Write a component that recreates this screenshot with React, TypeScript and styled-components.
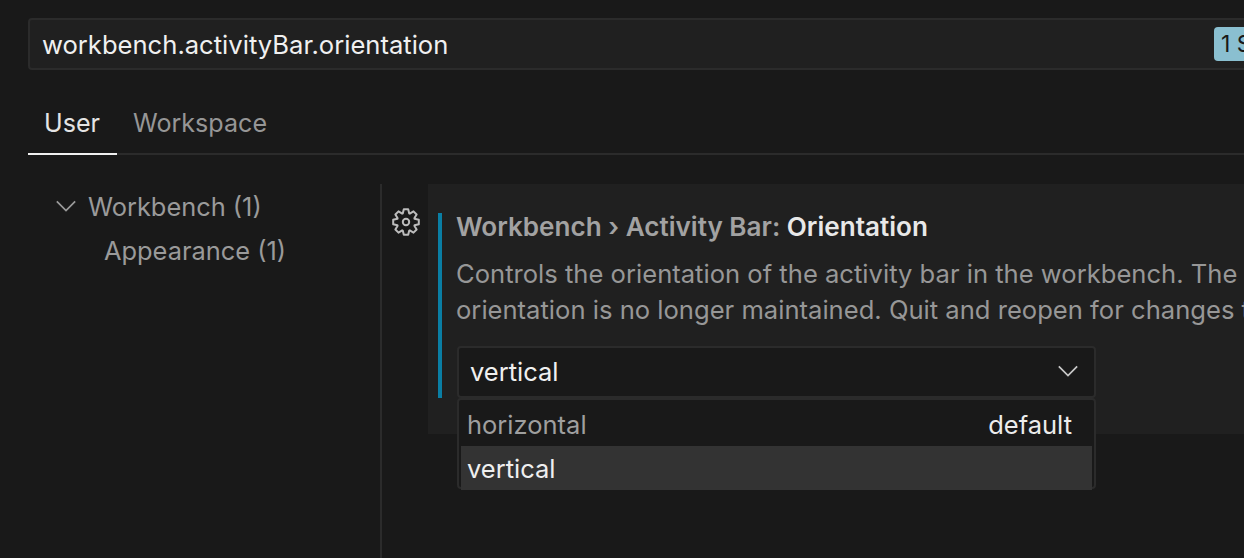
import React from "react";
import styled, { createGlobalStyle } from "styled-components";

const GlobalStyle = createGlobalStyle`
  html, body {
    margin: 0;
    height: 100%;
    background: #191919;
    overflow: hidden;
  }
  #root {
    height: 100%;
  }
`;

const Page = styled.div`
  height: 558px;
  width: 1244px;
  box-sizing: border-box;
  padding: 18px 0 0 28px;
  font-family: Inter, "Noto Sans", sans-serif;
  font-size: 25.5px;
  color: #9d9d9d;
  overflow: hidden;
`;

const SearchBox = styled.div`
  box-sizing: border-box;
  width: 1260px;
  height: 52px;
  display: flex;
  align-items: center;
  padding-left: 12px;
  background: #202020;
  border: 2px solid #2b2b2b;
  border-radius: 4px;
  font-size: 25.6px;
  color: #f0f0f0;
`;

const ResultCount = styled.span`
  margin: 0 16px 0 auto;
  height: 34px;
  width: 56px;
  padding-left: 7px;
  box-sizing: border-box;
  border-radius: 4px;
  background: #8abfd0;
  color: #191919;
  font-size: 23px;
  line-height: 34px;
  white-space: nowrap;
  overflow: hidden;
`;

const Tabs = styled.div`
  display: flex;
  height: 85px;
  box-sizing: border-box;
  width: 1260px;
  align-items: flex-end;
  border-bottom: 2px solid #2b2b2b;
`;

const Tab = styled.div<{ $active?: boolean }>`
  box-sizing: content-box;
  height: 30px;
  line-height: 30px;
  padding: 0 17px 15px 16px;
  margin-bottom: -2px;
  font-size: 25.1px;
  border-bottom: 2px solid ${(p) => (p.$active ? "#f0f0f0" : "transparent")};
  color: ${(p) => (p.$active ? "#e4e4e4" : "#969696")};
`;

const Body = styled.div`
  display: flex;
  margin-top: 29px;
  height: 400px;
`;

const Tree = styled.div`
  width: 352px;
  flex-shrink: 0;
  font-size: 25.4px;
  color: #9a9a9a;
`;

const TreeRow = styled.div<{ $depth: number }>`
  display: flex;
  align-items: center;
  height: 44px;
  padding-left: ${(p) => (p.$depth === 0 ? 27 : 76)}px;
  gap: 11px;
`;

const Content = styled.div`
  flex: 1;
  display: flex;
  border-left: 2px solid #2b2b2b;
  padding-left: 10px;
`;

const GearSlot = styled.div`
  width: 36px;
  flex-shrink: 0;
  padding-top: 24px;
  color: #bcbcbc;
`;

const Card = styled.div`
  position: relative;
  width: 830px;
  height: 250px;
  box-sizing: border-box;
  background: #202020;
  padding: 29px 0 0 10px;
`;

const Setting = styled.div`
  box-sizing: border-box;
  height: 185px;
  border-left: 4px solid #0a7ea4;
  padding-left: 15px;
`;

const SettingTitle = styled.div`
  height: 28px;
  line-height: 28px;
  margin-left: -1px;
  font-size: 26.1px;
  font-weight: 600;
  color: #a2a2a2;
  white-space: nowrap;
`;

const SettingName = styled.span`
  color: #e8e8e8;
`;

const Description = styled.div`
  margin: 15px 0 0 -1px;
  line-height: 36px;
  font-size: 25.6px;
  white-space: nowrap;
  color: #979797;
`;

const Select = styled.div`
  box-sizing: border-box;
  margin-top: 18px;
  width: 639px;
  height: 52px;
  display: flex;
  align-items: center;
  justify-content: space-between;
  padding: 0 15px 2px 11px;
  background: #191919;
  border: 2px solid #2b2b2b;
  border-radius: 4px;
  color: #f0f0f0;
`;

const Dropdown = styled.div`
  position: absolute;
  left: 29px;
  top: 214px;
  box-sizing: border-box;
  width: 639px;
  height: 91px;
  padding: 2px;
  background: #191919;
  border: 2px solid #2b2b2b;
  border-radius: 4px;
`;

const Option = styled.div<{ $selected?: boolean }>`
  display: flex;
  justify-content: space-between;
  align-items: center;
  height: 44px;
  padding: 0 20px 0 6px;
  background: ${(p) => (p.$selected ? "#333333" : "transparent")};
  color: ${(p) => (p.$selected ? "#efefef" : "#9f9f9f")};
`;

const DefaultTag = styled.span`
  color: #ececec;
`;

const Chevron = ({ size, color }: { size: number; color: string }) => (
  <svg width={size} height={size} viewBox="0 0 24 24" fill="none">
    <path d="M2 7l10 10L22 7" stroke={color} strokeWidth="1.9" />
  </svg>
);

const gearPath = () => {
  // outline of an 8 tooth cog, centred on 14,14
  const pts: string[] = [];
  for (let i = 0; i < 8; i++) {
    const a = (i * Math.PI) / 4 - Math.PI / 2;
    const at = (r: number, d: number) =>
      `${(14 + r * Math.cos(a + d)).toFixed(2)} ${(14 + r * Math.sin(a + d)).toFixed(2)}`;
    pts.push(at(9.2, -0.36), at(13, -0.17), at(13, 0.17), at(9.2, 0.36));
  }
  return `M${pts.join("L")}Z`;
};

const Gear = () => (
  <svg width="28" height="28" viewBox="0 0 28 28" fill="none" stroke="currentColor" strokeWidth="2">
    <path d={gearPath()} strokeLinejoin="round" />
    <circle cx="14" cy="14" r="3.2" />
  </svg>
);

export default function App() {
  return (
    <Page>
      <GlobalStyle />
      <SearchBox>
        workbench.activityBar.orientation
        <ResultCount>1 Setting</ResultCount>
      </SearchBox>
      <Tabs>
        <Tab $active>User</Tab>
        <Tab>Workspace</Tab>
      </Tabs>
      <Body>
        <Tree>
          <TreeRow $depth={0}>
            <Chevron size={22} color="#9a9a9a" />
            Workbench (1)
          </TreeRow>
          <TreeRow $depth={1}>Appearance (1)</TreeRow>
        </Tree>
        <Content>
          <GearSlot>
            <Gear />
          </GearSlot>
          <Card>
            <Setting>
              <SettingTitle>
                Workbench › Activity Bar: <SettingName>Orientation</SettingName>
              </SettingTitle>
              <Description>
                Controls the orientation of the activity bar in the workbench. The
                <br />
                orientation is no longer maintained. Quit and reopen for changes to take effect.
              </Description>
              <Select>
                vertical
                <Chevron size={22} color="#c8c8c8" />
              </Select>
            </Setting>
            <Dropdown>
              <Option>
                horizontal
                <DefaultTag>default</DefaultTag>
              </Option>
              <Option $selected>vertical</Option>
            </Dropdown>
          </Card>
        </Content>
      </Body>
    </Page>
  );
}
